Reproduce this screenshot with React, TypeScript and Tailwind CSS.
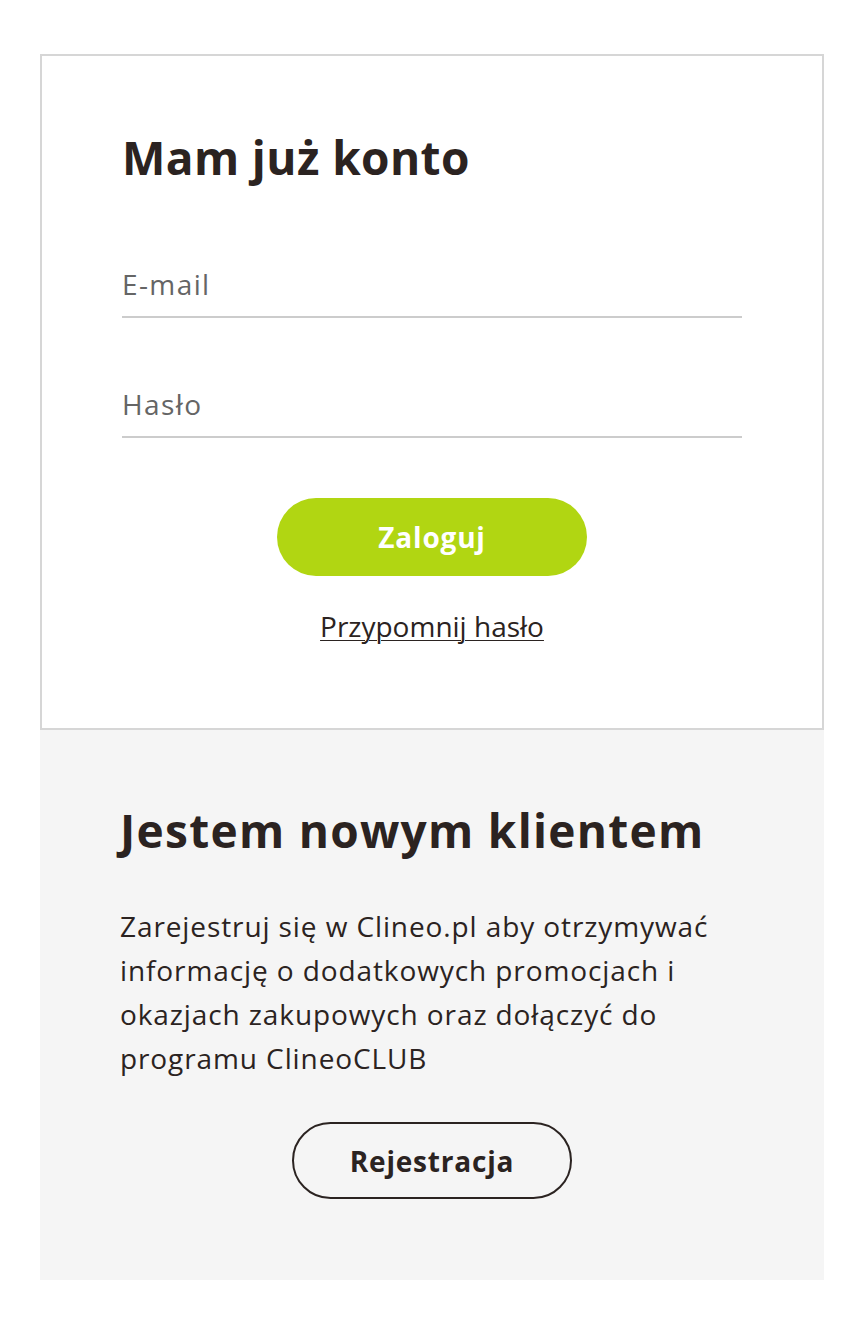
export default function App() {
  return (
    <main className="min-h-[1330px] bg-white px-10 pt-[54px] font-['Open_Sans',sans-serif] text-[#2b2321]">
      <section className="border-2 border-[#d6d6d6] px-[80px] pt-[73px] pb-[84px]">
        <h1 className="text-[46px] font-bold leading-[56px] tracking-[0.4px]">Mam już konto</h1>

        <div className="mt-[67px] flex flex-col gap-[54px]">
          <input
            type="email"
            placeholder="E-mail"
            className="h-[66px] w-full border-b-2 border-[#cccccc] bg-transparent text-[28px] tracking-[1.4px] outline-none placeholder:text-[#656565]"
          />
          <input
            type="password"
            placeholder="Hasło"
            className="h-[66px] w-full border-b-2 border-[#cccccc] bg-transparent text-[28px] tracking-[1.4px] outline-none placeholder:text-[#656565]"
          />
        </div>

        <div className="mt-[60px] flex flex-col items-center">
          <button className="h-[78px] w-[310px] rounded-full bg-[#b1d612] text-[28px] font-bold tracking-[0.8px] text-white">
            Zaloguj
          </button>
          <a
            href="#"
            className="mt-[32px] text-[28px] leading-[36px] underline decoration-1 underline-offset-[3px]"
          >
            Przypomnij hasło
          </a>
        </div>
      </section>

      <section className="bg-[#f5f5f5] px-[80px] pt-[72px] pb-[81px]">
        <h2 className="text-[46px] font-bold leading-[56px] tracking-[1.3px]">Jestem nowym klientem</h2>
        <p className="mt-[46px] text-[28px] leading-[44px] tracking-[0.9px]">
          Zarejestruj się w Clineo.pl aby otrzymywać informację o dodatkowych promocjach i okazjach
          zakupowych oraz dołączyć do programu ClineoCLUB
        </p>
        <div className="mt-[42px] flex justify-center">
          <button className="h-[77px] w-[280px] rounded-full border-2 border-[#2b2321] text-[28px] font-bold tracking-[0.8px]">
            Rejestracja
          </button>
        </div>
      </section>
    </main>
  );
}
